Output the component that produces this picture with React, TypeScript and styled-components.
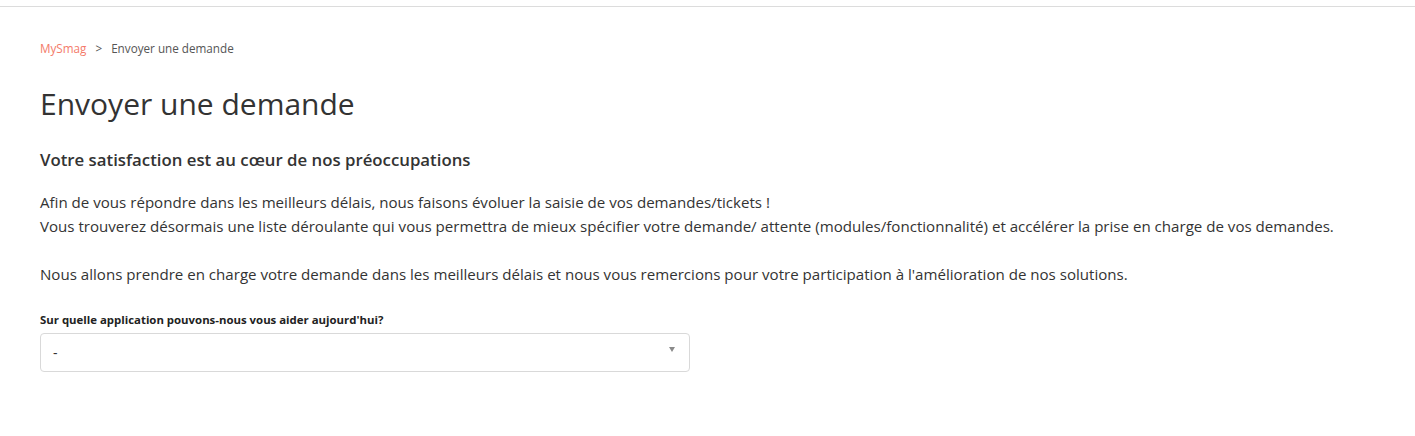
import React from "react";
import styled, { createGlobalStyle } from "styled-components";

const Global = createGlobalStyle`
  html, body { margin: 0; padding: 0; background: #fff; }
  body { font-family: "Open Sans", "Noto Sans", sans-serif; color: #333; }
  * { box-sizing: border-box; }
`;

const Page = styled.div`
  width: 1415px;
  min-height: 436px;
  padding-top: 6px;
`;

const TopRule = styled.div`
  height: 1px;
  background: #dcdcdc;
`;

const Content = styled.main`
  padding: 33px 40px 0 40px;
  display: flex;
  flex-direction: column;
`;

const Breadcrumb = styled.nav`
  display: flex;
  align-items: center;
  gap: 9px;
  font-size: 11.7px;
  line-height: 16px;
  color: #555;
`;

const Crumb = styled.span<{ $link?: boolean }>`
  color: ${(p) => (p.$link ? "#f47a6a" : "#555")};
`;

const Title = styled.h1`
  margin: 28px 0 0;
  font-size: 30px;
  font-weight: 400;
  line-height: 40px;
  color: #333;
`;

const Subtitle = styled.h2`
  margin: 25px 0 0;
  font-size: 16.8px;
  font-weight: 600;
  line-height: 22px;
  color: #333;
`;

const Paragraph = styled.p`
  margin: 19px 0 0;
  font-size: 15.1px;
  line-height: 24px;
  color: #333;
`;

const Field = styled.div`
  margin-top: 26px;
  display: flex;
  flex-direction: column;
  gap: 5px;
`;

const Label = styled.label`
  font-size: 11.4px;
  font-weight: 700;
  line-height: 16px;
  color: #222;
`;

const Select = styled.div`
  width: 650px;
  height: 39px;
  border: 1px solid #d9d9d9;
  border-radius: 4px;
  display: flex;
  align-items: center;
  justify-content: space-between;
  padding: 0 14px 0 12px;
  font-size: 14px;
  color: #333;
`;

const Caret = styled.span`
  width: 0;
  height: 0;
  border-left: 3px solid transparent;
  border-right: 3px solid transparent;
  border-top: 5px solid #8a8a8a;
  margin-bottom: 6px;
`;

export default function App() {
  return (
    <>
      <Global />
      <Page>
        <TopRule />
        <Content>
          <Breadcrumb>
            <Crumb $link>MySmag</Crumb>
            <Crumb>&gt;</Crumb>
            <Crumb>Envoyer une demande</Crumb>
          </Breadcrumb>
          <Title>Envoyer une demande</Title>
          <Subtitle>Votre satisfaction est au cœur de nos préoccupations</Subtitle>
          <Paragraph>
            Afin de vous répondre dans les meilleurs délais, nous faisons évoluer la saisie de vos demandes/tickets !
            <br />
            Vous trouverez désormais une liste déroulante qui vous permettra de mieux spécifier votre demande/ attente (modules/fonctionnalité) et accélérer la prise en charge de vos demandes.
            <br />
            <br />
            Nous allons prendre en charge votre demande dans les meilleurs délais et nous vous remercions pour votre participation à l'amélioration de nos solutions.
          </Paragraph>
          <Field>
            <Label>Sur quelle application pouvons-nous vous aider aujourd'hui?</Label>
            <Select>
              <span>-</span>
              <Caret />
            </Select>
          </Field>
        </Content>
      </Page>
    </>
  );
}
